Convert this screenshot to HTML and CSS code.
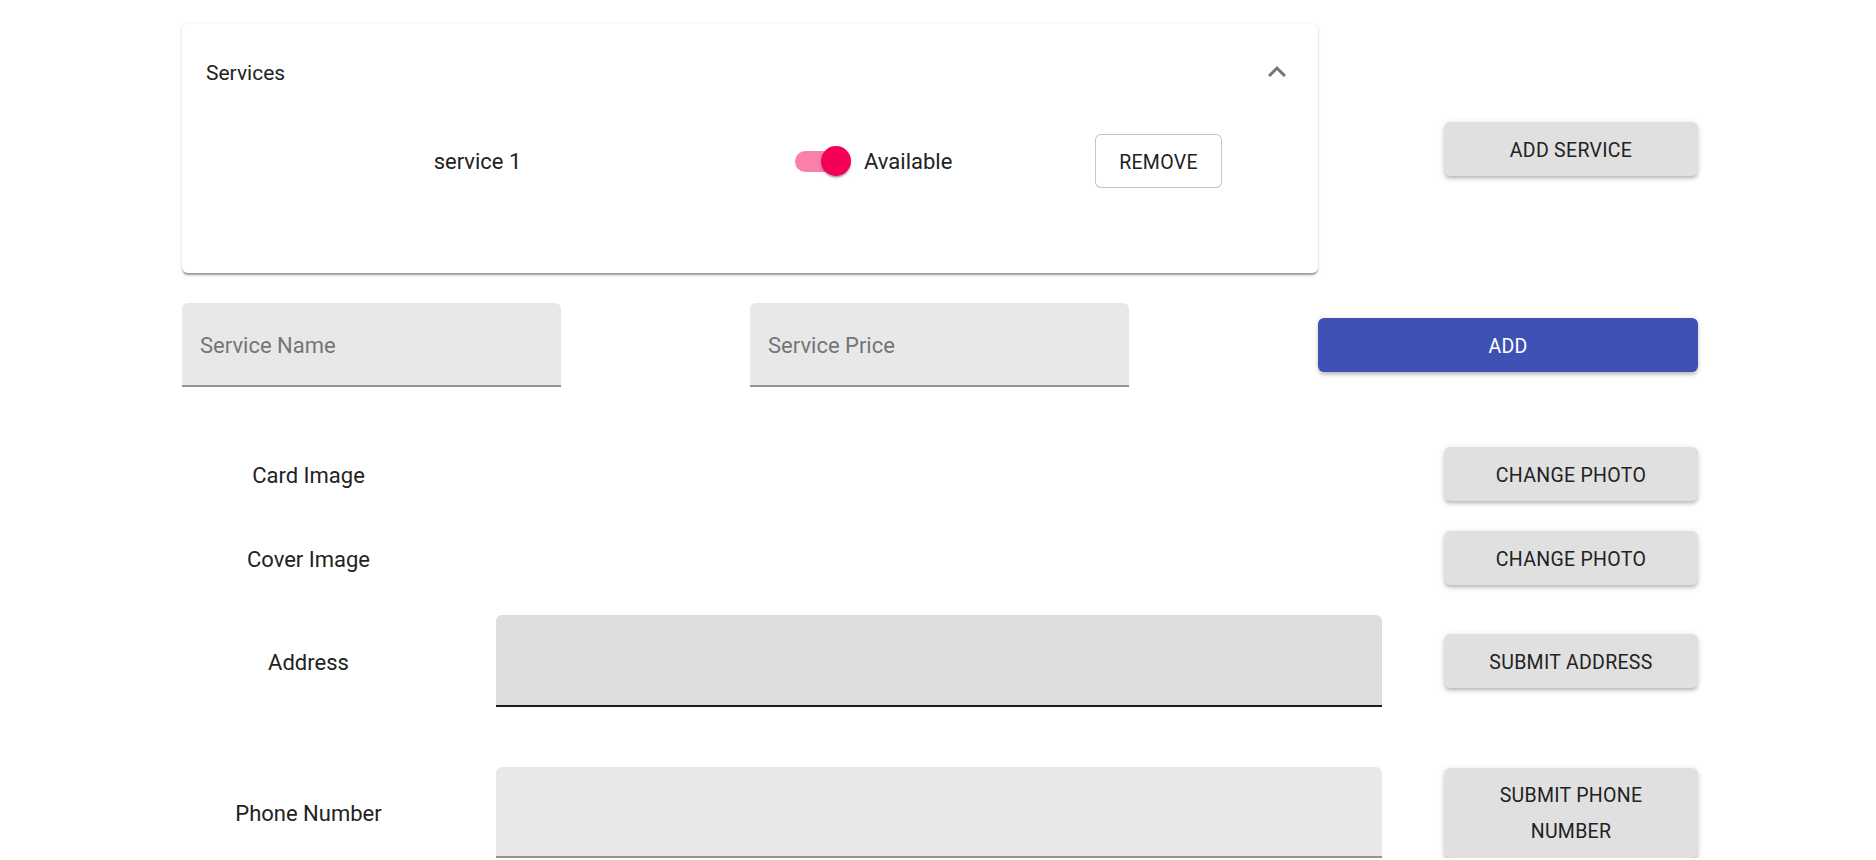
FILE: index.html
```html
<!DOCTYPE html>
<html lang="en">
<head>
<meta charset="utf-8">
<title>Services</title>
<link rel="stylesheet" href="styles.css">
</head>
<body>
<div class="page">
  <div class="row row-top">
    <div class="panel">
      <div class="panel-head">
        <span class="panel-title">Services</span>
        <span class="chevron">
          <svg viewBox="0 0 24 24" width="36" height="36"><path d="M12 8l-6 6 1.41 1.41L12 10.83l4.59 4.58L18 14z"/></svg>
        </span>
      </div>
      <div class="panel-body">
        <div class="svc-name">service 1</div>
        <div class="svc-toggle">
          <span class="switch"><span class="track"></span><span class="thumb"></span></span>
          <span class="switch-label">Available</span>
        </div>
        <button class="btn-outline">REMOVE</button>
      </div>
    </div>
    <button class="btn btn-side">ADD SERVICE</button>
  </div>

  <div class="row row-add">
    <div class="field field-short"><span class="placeholder">Service Name</span></div>
    <div class="field field-short"><span class="placeholder">Service Price</span></div>
    <button class="btn btn-primary">ADD</button>
  </div>

  <div class="row row-photo row-first">
    <div class="label">Card Image</div>
    <button class="btn btn-side">CHANGE PHOTO</button>
  </div>

  <div class="row row-photo">
    <div class="label">Cover Image</div>
    <button class="btn btn-side">CHANGE PHOTO</button>
  </div>

  <div class="row row-input row-address">
    <div class="label">Address</div>
    <div class="field field-wide field-hover"></div>
    <button class="btn btn-side">SUBMIT ADDRESS</button>
  </div>

  <div class="row row-input row-phone">
    <div class="label">Phone Number</div>
    <div class="field field-wide field-phone"></div>
    <button class="btn btn-side btn-tall">SUBMIT PHONE NUMBER</button>
  </div>
</div>
</body>
</html>
```

FILE: styles.css
```css
html, body {
  margin: 0;
  padding: 0;
  background: #ffffff;
}

body {
  font-family: Roboto, "Noto Sans", Arial, sans-serif;
  color: #222222;
}

.page {
  width: 1516px;
  margin-left: 182px;
  padding-top: 24px;
}

.row {
  display: flex;
  align-items: center;
}

/* ---------- top row: expansion panel ---------- */
.row-top {
  height: 249px;
}

.panel {
  width: 1136px;
  height: 249px;
  box-sizing: border-box;
  background: #fff;
  border-radius: 6px;
  box-shadow: 0 3px 1.5px -1.5px rgba(0,0,0,0.2),
              0 1.5px 1.5px 0 rgba(0,0,0,0.14),
              0 1.5px 4.5px 0 rgba(0,0,0,0.12);
  display: flex;
  flex-direction: column;
}

.panel-head {
  height: 96px;
  display: flex;
  align-items: center;
  padding: 0 23px 0 24px;
}

.panel-title {
  font-size: 21px;
  padding-top: 2px;
}

.chevron {
  margin-left: auto;
  width: 36px;
  height: 36px;
  display: flex;
}

.chevron svg {
  fill: rgba(0,0,0,0.54);
}

.panel-body {
  display: flex;
  align-items: center;
  padding: 14px 36px 85px 36px;
  height: 54px;
}

.svc-name {
  width: 519px;
  text-align: center;
  font-size: 22px;
  padding-top: 1px;
}

.svc-toggle {
  width: 358px;
  display: flex;
  align-items: center;
  padding-left: 40px;
  box-sizing: border-box;
}

.switch {
  position: relative;
  width: 87px;
  height: 57px;
  flex: none;
}

.track {
  position: absolute;
  left: 18px;
  top: 18px;
  width: 51px;
  height: 21px;
  border-radius: 10.5px;
  background: #fa80ab;
}

.thumb {
  position: absolute;
  left: 43.5px;
  top: 13.5px;
  width: 30px;
  height: 30px;
  border-radius: 50%;
  background: #f50057;
  box-shadow: 0 3px 1.5px -1.5px rgba(0,0,0,0.2),
              0 1.5px 1.5px 0 rgba(0,0,0,0.14),
              0 1.5px 4.5px 0 rgba(0,0,0,0.12);
}

.switch-label {
  font-size: 22px;
  padding-top: 1px;
}

.btn-outline {
  width: 127px;
  height: 54px;
  box-sizing: border-box;
  border: 1.5px solid rgba(0,0,0,0.23);
  border-radius: 6px;
  background: #fff;
  font-family: inherit;
  font-size: 19.5px;
  letter-spacing: 0.3px;
  color: #222222;
  padding: 2px 0 0 0;
}

/* ---------- buttons ---------- */
.btn {
  box-sizing: border-box;
  border: 0;
  border-radius: 6px;
  background: #e0e0e0;
  color: #222222;
  font-family: inherit;
  font-size: 19.5px;
  letter-spacing: 0.3px;
  line-height: 36px;
  padding: 11px 24px 7px 24px;
  text-transform: uppercase;
  box-shadow: 0 3px 1.5px -3px rgba(0,0,0,0.2),
              0 3px 3px 0 rgba(0,0,0,0.14),
              0 1.5px 7.5px 0 rgba(0,0,0,0.12);
}

.btn-side {
  width: 254px;
  margin-left: auto;
}

.btn-tall {
  padding: 10px 24px 8px 24px;
}

.btn-primary {
  width: 380px;
  background: #3f51b5;
  color: #fff;
}

/* ---------- fields ---------- */
.field {
  box-sizing: border-box;
  background: #e8e8e8;
  border-radius: 6px 6px 0 0;
  border-bottom: 2px solid #949494;
  display: flex;
  align-items: center;
  padding-left: 18px;
}

.placeholder {
  font-size: 22px;
  color: #757575;
  padding-top: 4px;
}

.row-add {
  margin-top: 30px;
  height: 83px;
  justify-content: space-between;
}

.field-short {
  width: 379px;
  height: 84px;
}

.field-wide {
  width: 886px;
  margin-left: 61px;
}

.field-hover {
  height: 92px;
  background: #dddddd;
  border-bottom-color: #1e1e1e;
}

.field-phone {
  height: 91px;
}

/* ---------- label rows ---------- */
.label {
  width: 253px;
  text-align: center;
  font-size: 22px;
  flex: none;
  padding-top: 2px;
}

.row-photo {
  margin-top: 30px;
  height: 54px;
}

.row-first {
  margin-top: 61px;
}

.row-address {
  margin-top: 30px;
  height: 92px;
}

.row-phone {
  margin-top: 60px;
  height: 91px;
}
```
